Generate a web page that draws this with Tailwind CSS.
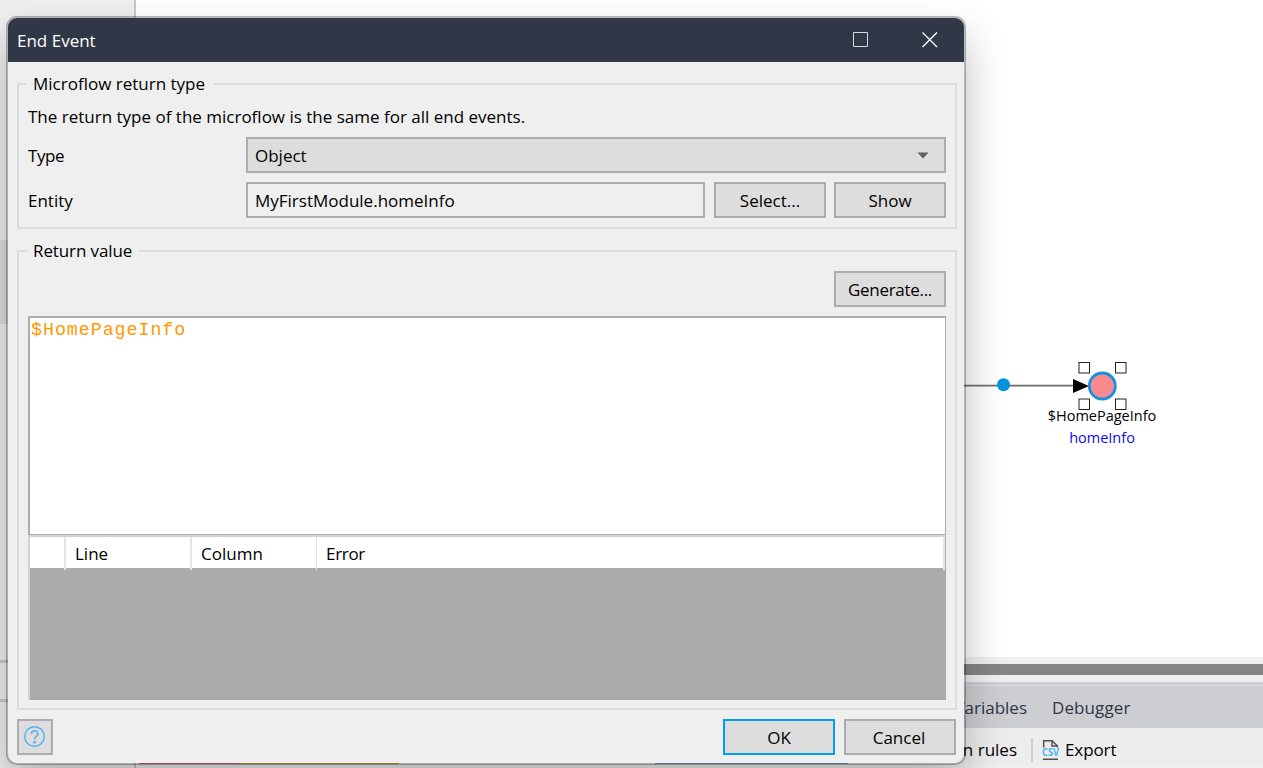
<!DOCTYPE html>
<html lang="en">
  <head>
    <meta charset="UTF-8" />
    <meta name="viewport" content="width=device-width, initial-scale=1.0" />
    <script src="https://cdn.jsdelivr.net/npm/@tailwindcss/browser@4"></script>
    <title>End Event</title>
  </head>
  <body
    class="relative flex h-screen w-screen overflow-hidden bg-[#efefef] font-['Open_Sans','Noto_Sans',sans-serif] text-[17px] leading-6 text-black"
  >
    <!-- Side panel -->
    <div class="flex w-[136px] shrink-0 flex-col border-r-2 border-[#c8c8cc]">
      <div class="h-[240px]"></div>
      <div class="h-[84px] bg-[#dedee2]"></div>
      <div class="h-[336px]"></div>
      <div class="h-[42px] border-y-3 border-[#c8c8cc]"></div>
    </div>

    <!-- Editor -->
    <div class="flex min-w-0 grow flex-col">
      <div class="relative h-[657px] shrink-0 bg-white">
        <svg class="absolute top-[350px] left-[824px]" width="220" height="70" viewBox="960 350 220 70">
          <path d="M960 385.7H1076" stroke="#6e6e6e" stroke-width="1.8" />
          <circle cx="1003.5" cy="384.7" r="6.5" fill="#0595dc" />
          <path d="M1073 379v14l16-7z" fill="#000" />
          <circle cx="1102.3" cy="386" r="13" fill="#f78b8e" stroke="#1491e6" stroke-width="2.8" />
          <g fill="#fff" stroke="#222" stroke-width="1">
            <rect x="1079" y="362.5" width="10.5" height="10.5" />
            <rect x="1115.5" y="362.5" width="10.5" height="10.5" />
            <rect x="1079" y="399" width="10.5" height="10.5" />
            <rect x="1115.5" y="399" width="10.5" height="10.5" />
          </g>
        </svg>
        <div class="absolute top-[405px] left-[886px] w-[160px] text-center text-[14.5px] leading-[22px]">
          <p>$HomePageInfo</p>
          <p class="text-[#0a0af0]">homeInfo</p>
        </div>
      </div>
      <div class="h-[7px] shrink-0"></div>
      <div class="h-[11px] shrink-0 bg-[#858585]"></div>
      <div class="h-[7px] shrink-0"></div>
      <div class="h-[4px] shrink-0 border-b border-[#dcdce0] bg-[#cdced2]"></div>
      <div class="flex h-[42px] shrink-0 items-center bg-[#cdced2] pt-[2px] text-[#2f3646]">
        <span class="w-[891px] text-right">Variables</span>
        <span class="ml-[25px] tracking-[0.1px]">Debugger</span>
      </div>
      <div class="flex h-[35px] shrink-0 items-center bg-[#ededed] pt-[9px]">
        <span class="w-[881px] text-right">n rules</span>
        <span class="ml-[14px] h-6 w-[2px] bg-[#cdced2]"></span>
        <svg class="ml-[9px]" width="18" height="22" viewBox="0 0 18 22" fill="none">
          <path d="M1.7 8.5V1.8H10L15.5 7V8.5M10 1.8V7H15.5M1 20.2H16" stroke="#505050" stroke-width="1.5" />
          <text x="0" y="17" textLength="17" lengthAdjust="spacingAndGlyphs" font-size="10" font-weight="700" fill="#4db1f5">CSV</text>
        </svg>
        <span class="ml-[5px] tracking-[-0.1px]">Export</span>
      </div>
      <!-- Underlines of the severity filters -->
      <div class="flex h-px shrink-0">
        <span class="ml-[3px] w-[101px] bg-[#e0606e]"></span>
        <span class="w-[159px] bg-[#c99a30]"></span>
        <span class="ml-[256px] w-[193px] bg-[#7795c4]"></span>
      </div>
    </div>

    <!-- Dialog -->
    <div
      class="absolute top-4 left-[6px] flex h-[749px] w-[960px] flex-col overflow-hidden rounded-[11px] border-2 border-black/27 bg-[#efefef] bg-clip-padding shadow-[0_20px_40px_rgba(0,0,0,0.25)]"
    >
      <div class="flex h-[44px] shrink-0 items-center bg-[#303747] pl-[9px] text-white">
        <span class="grow pt-[2px]">End Event</span>
        <svg class="mr-[53px]" width="16" height="16" viewBox="0 0 16 16">
          <path d="M.5.5H14.5V14.5H.5z" fill="none" stroke="#d6d8dc" />
        </svg>
        <svg class="mr-[26px]" width="16" height="16" viewBox="0 0 16 16">
          <path d="M.5.5L15 15M15 .5L.5 15" stroke="#fff" stroke-width="1.3" />
        </svg>
      </div>

      <div class="relative mx-[9px] mt-[21px] mr-[7px] h-[146px] shrink-0 border-2 border-[#dcdcdc] px-[9px] pt-5">
        <span class="absolute -top-[13px] left-[8px] w-[186px] bg-[#efefef] pl-[6px]">Microflow return type</span>
        <p>The return type of the microflow is the same for all end events.</p>
        <div class="mt-2 flex h-9 items-center">
          <span class="w-[218px] pt-[2px] tracking-[-0.4px]">Type</span>
          <div class="flex h-9 grow items-center justify-between border-2 border-[#acacac] bg-[#dddddd] pr-[15px] pl-[7px]">
            <span class="pt-[2px]">Object</span>
            <svg width="12" height="7" viewBox="0 0 12 7"><path d="M.5.5H11.5L6 6.5z" fill="#606060" /></svg>
          </div>
        </div>
        <div class="mt-[9px] flex h-9 items-center">
          <span class="w-[218px] pt-[2px]">Entity</span>
          <div class="flex h-9 grow items-center border-2 border-[#acacb0] pt-[2px] pl-[7px]">MyFirstModule.homeInfo</div>
          <button class="ml-[9px] h-9 w-[112px] border-2 border-[#acacac] bg-[#dddddd] pt-[2px]">Select...</button>
          <button class="ml-2 h-9 w-[112px] border-2 border-[#acacac] bg-[#dddddd] pt-[2px]">Show</button>
        </div>
      </div>

      <div class="relative mx-[9px] mt-[21px] mr-[7px] flex h-[460px] shrink-0 flex-col border-2 border-[#dcdcdc] px-[9px] pt-[19px]">
        <span class="absolute -top-[13px] left-[8px] w-[112px] bg-[#efefef] pl-[6px] tracking-[-0.1px]">Return value</span>
        <button class="h-9 w-[112px] self-end border-2 border-[#acacac] bg-[#dddddd] pt-[2px] tracking-[-0.3px]">Generate...</button>
        <div
          class="mt-[9px] h-[219px] border border-t-2 border-l-2 border-[#acacb0] bg-white pl-px font-['Liberation_Mono',monospace] text-[18.3px] leading-6 tracking-[0.97px] text-[#ff9900]"
        >
          $HomePageInfo
        </div>
        <div class="h-[165px] border-t-2 border-l-2 border-[#d2d2d6] bg-[#ababab]">
          <div class="mr-px flex h-[31px] items-start bg-white">
            <span class="h-[33px] w-[36px] border-r-2 border-[#e4e4e4]"></span>
            <span class="h-[33px] w-[126px] border-r-2 border-[#e4e4e4] pt-[5px] pl-[9px]">Line</span>
            <span class="h-[33px] w-[125px] border-r border-[#e4e4e4] pt-[5px] pl-[9px]">Column</span>
            <span class="h-[33px] grow border-r-2 border-[#e4e4e4] pt-[5px] pl-[9px] tracking-[-0.3px]">Error</span>
          </div>
        </div>
      </div>

      <div class="mt-[9px] flex h-9 shrink-0 items-center pr-2 pl-[9px]">
        <button class="flex size-9 items-center justify-center border-2 border-[#acacac] bg-[#dddddd]">
          <svg width="22" height="22" viewBox="0 0 22 22" fill="none" stroke="#4db1f5" stroke-width="1.4">
            <circle cx="10.5" cy="10.5" r="9.8" />
            <path d="M7.5 8C7.5 3.7 14 3.7 14 7.7C14 10 10.5 10.2 10.5 13.5" />
            <circle cx="10.5" cy="16.3" r="1" fill="#4db1f5" stroke-width=".8" />
          </svg>
        </button>
        <button class="ml-auto h-9 w-[112px] border-2 border-[#049cf0] bg-[#dddddd] pt-[2px]">OK</button>
        <button class="ml-[9px] h-9 w-[112px] border-2 border-[#acacac] bg-[#dddddd] pt-[2px] pr-[2px]">Cancel</button>
      </div>
    </div>
  </body>
</html>
